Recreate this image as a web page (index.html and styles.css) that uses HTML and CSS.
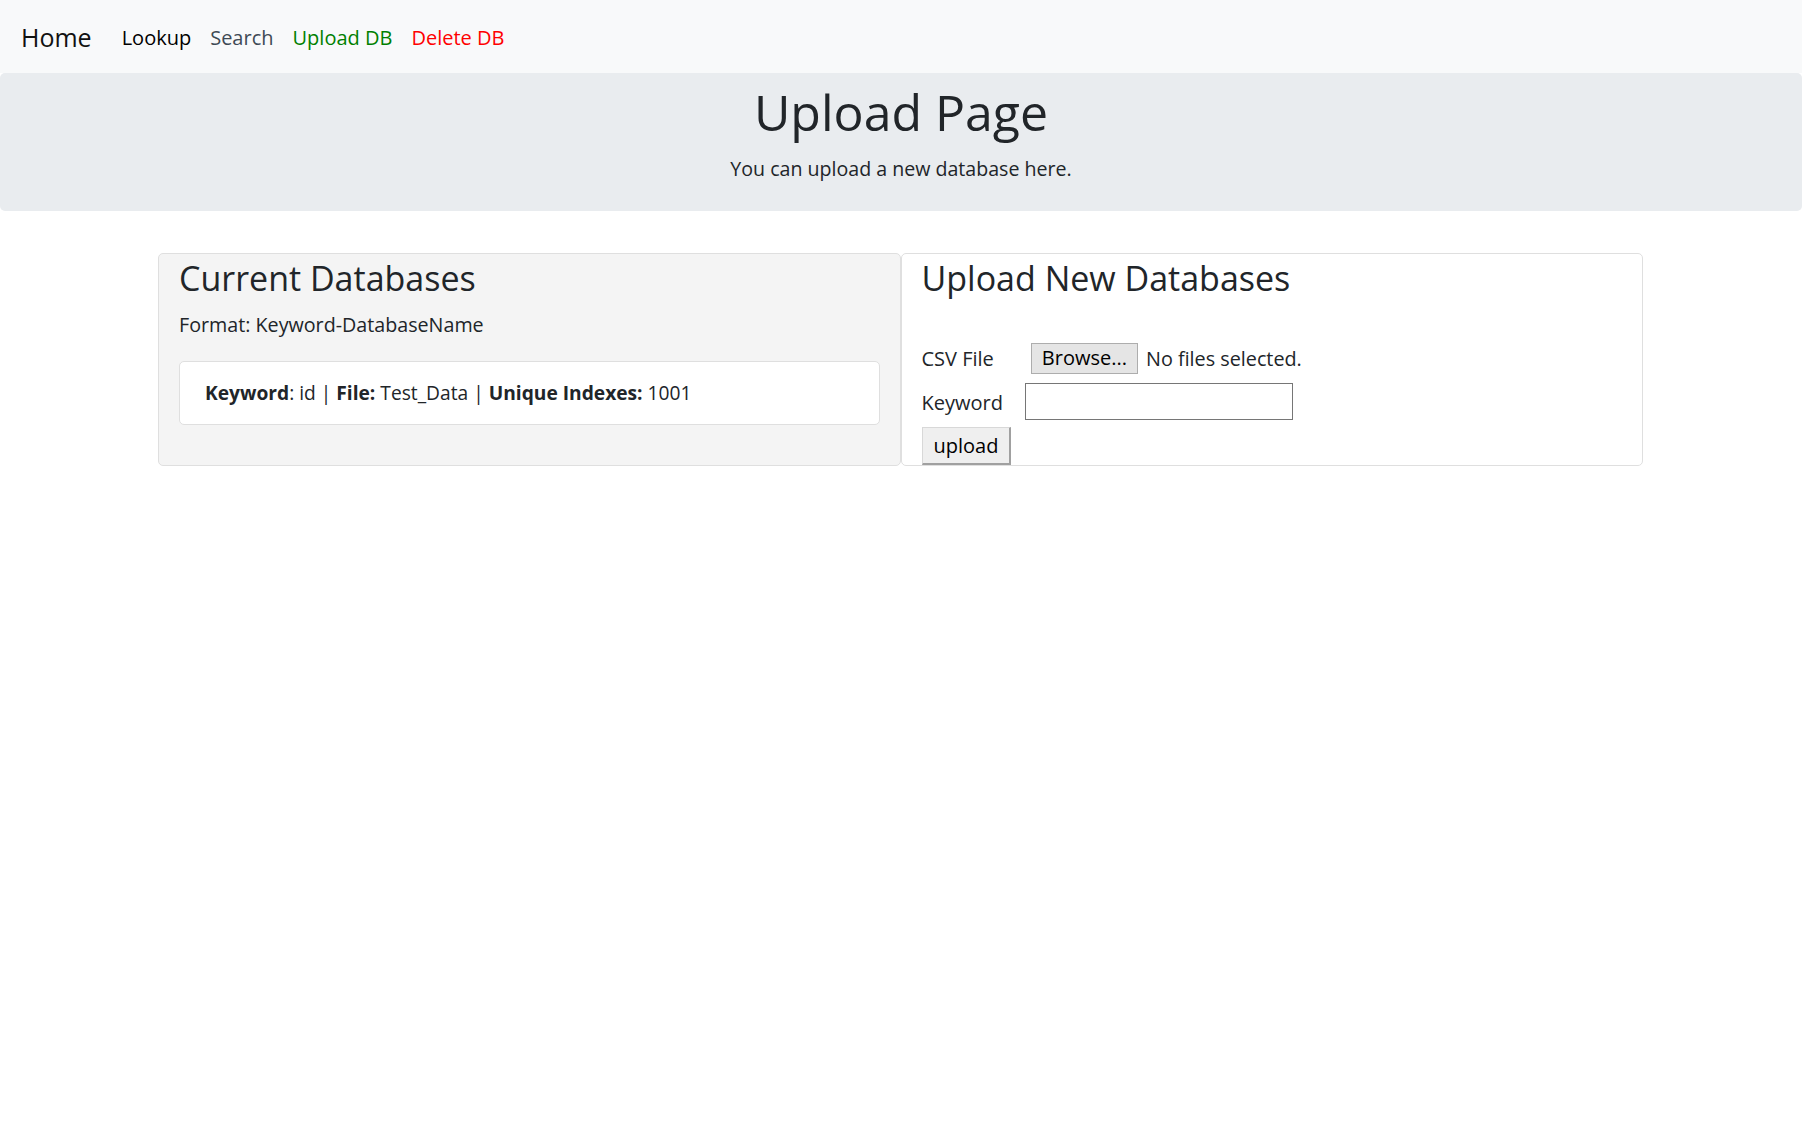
FILE: index.html
```html
<!DOCTYPE html>
<html lang="en">
<head>
<meta charset="utf-8">
<title>Upload Page</title>
<link rel="stylesheet" href="styles.css">
</head>
<body>
<nav class="navbar">
  <a class="brand" href="#">Home</a>
  <ul class="nav">
    <li><a class="nav-link link-black" href="#">Lookup</a></li>
    <li><a class="nav-link link-slate" href="#">Search</a></li>
    <li><a class="nav-link link-green" href="#">Upload DB</a></li>
    <li><a class="nav-link link-red" href="#">Delete DB</a></li>
  </ul>
</nav>
<header class="jumbotron">
  <h1 class="jumbo-title">Upload Page</h1>
  <p class="jumbo-lead">You can upload a new database here.</p>
</header>
<main class="container">
  <section class="card card-gray">
    <h3 class="card-title">Current Databases</h3>
    <p class="card-text">Format: Keyword-DatabaseName</p>
    <div class="db-item"><b>Keyword</b>: id | <b>File:</b> Test_Data | <b>Unique Indexes:</b> 1001</div>
  </section>
  <section class="card card-form">
    <h3 class="card-title">Upload New Databases</h3>
    <form class="upload-form">
      <div class="form-row row-file">
        <label class="form-label">CSV File</label>
        <button type="button" class="browse-btn">Browse...</button>
        <span class="file-status">No files selected.</span>
      </div>
      <div class="form-row row-keyword">
        <label class="form-label" for="kw">Keyword</label>
        <input class="text-input" id="kw" type="text">
      </div>
      <div class="form-row">
        <button type="button" class="submit-btn">upload</button>
      </div>
    </form>
  </section>
</main>
</body>
</html>
```
FILE: styles.css
```css
* { box-sizing: border-box; }
html, body { margin: 0; padding: 0; }
body {
  font-family: "Open Sans", "Noto Sans", "Liberation Sans", sans-serif;
  font-size: 19.6px;
  line-height: 1.5;
  color: #212529;
  background: #fff;
}
a { text-decoration: none; }

.navbar {
  height: 73px;
  background: #f8f9fa;
  display: flex;
  align-items: center;
  padding: 3px 20px 0 21px;
}
.brand {
  font-size: 25px;
  color: #111;
  margin-right: 30px;
}
.nav {
  list-style: none;
  margin: 0;
  padding: 0;
  display: flex;
  gap: 19px;
}
.nav-link { font-size: 20px; }
.link-black { color: #000; }
.link-slate { color: #3e4a55; }
.link-green { color: #008000; }
.link-red { color: #ff0000; }

.jumbotron {
  background: #e9ecef;
  border-radius: 5px;
  height: 138px;
  text-align: center;
  padding-top: 9px;
}
.jumbo-title {
  margin: 0;
  font-size: 50px;
  font-weight: 400;
  line-height: 60px;
}
.jumbo-lead {
  margin: 12px 0 0;
  font-size: 19.6px;
  line-height: 30px;
}

.container {
  margin: 42px 159px 0 158px;
  display: flex;
}
.card {
  flex: 1;
  border: 1px solid #dfdfdf;
  border-radius: 5px;
  padding: 0 20px 38px;
  background: #fff;
}
.card-gray { background: #f4f4f4; }
.card-form { padding-bottom: 0; }
.card-title {
  margin: 0;
  font-size: 34px;
  font-weight: 400;
  line-height: 48px;
}
.card-text {
  margin: 8px 0 21px;
  font-size: 19.7px;
  line-height: 30px;
}
.db-item {
  background: #fff;
  border: 1px solid #dfdfdf;
  border-radius: 5px;
  padding: 16px 25px;
  font-size: 19.2px;
  line-height: 30px;
}
.db-item b { font-weight: 700; }

.upload-form {
  margin-top: 39px;
  display: flex;
  flex-direction: column;
}
.form-row {
  display: flex;
  align-items: center;
}
.row-file { padding-top: 1px; }
.row-keyword { margin-top: 9px; margin-bottom: 7px; }
.form-label {
  font-size: 20px;
  line-height: 30px;
  margin-right: 22px;
  padding-top: 2px;
}
.row-file .form-label { margin-right: 37px; }
.browse-btn {
  font-family: inherit;
  font-size: 20px;
  height: 31px;
  padding: 0 10px;
  background: #e5e5e5;
  border: 1px solid #adadad;
  color: #000;
  line-height: 1;
}
.file-status {
  margin-left: 8px;
  font-size: 19.8px;
  padding-top: 2px;
}
.text-input {
  width: 268px;
  height: 37px;
  border: 1px solid #767676;
  background: #fff;
}
.submit-btn {
  font-family: inherit;
  font-size: 20px;
  height: 38px;
  padding: 0 11px;
  background: #efefef;
  color: #000;
  border-style: solid;
  border-width: 1px 2px 2px 1px;
  border-color: #d8d8d8 #a0a0a0 #a0a0a0 #d8d8d8;
  line-height: 1;
}
```
